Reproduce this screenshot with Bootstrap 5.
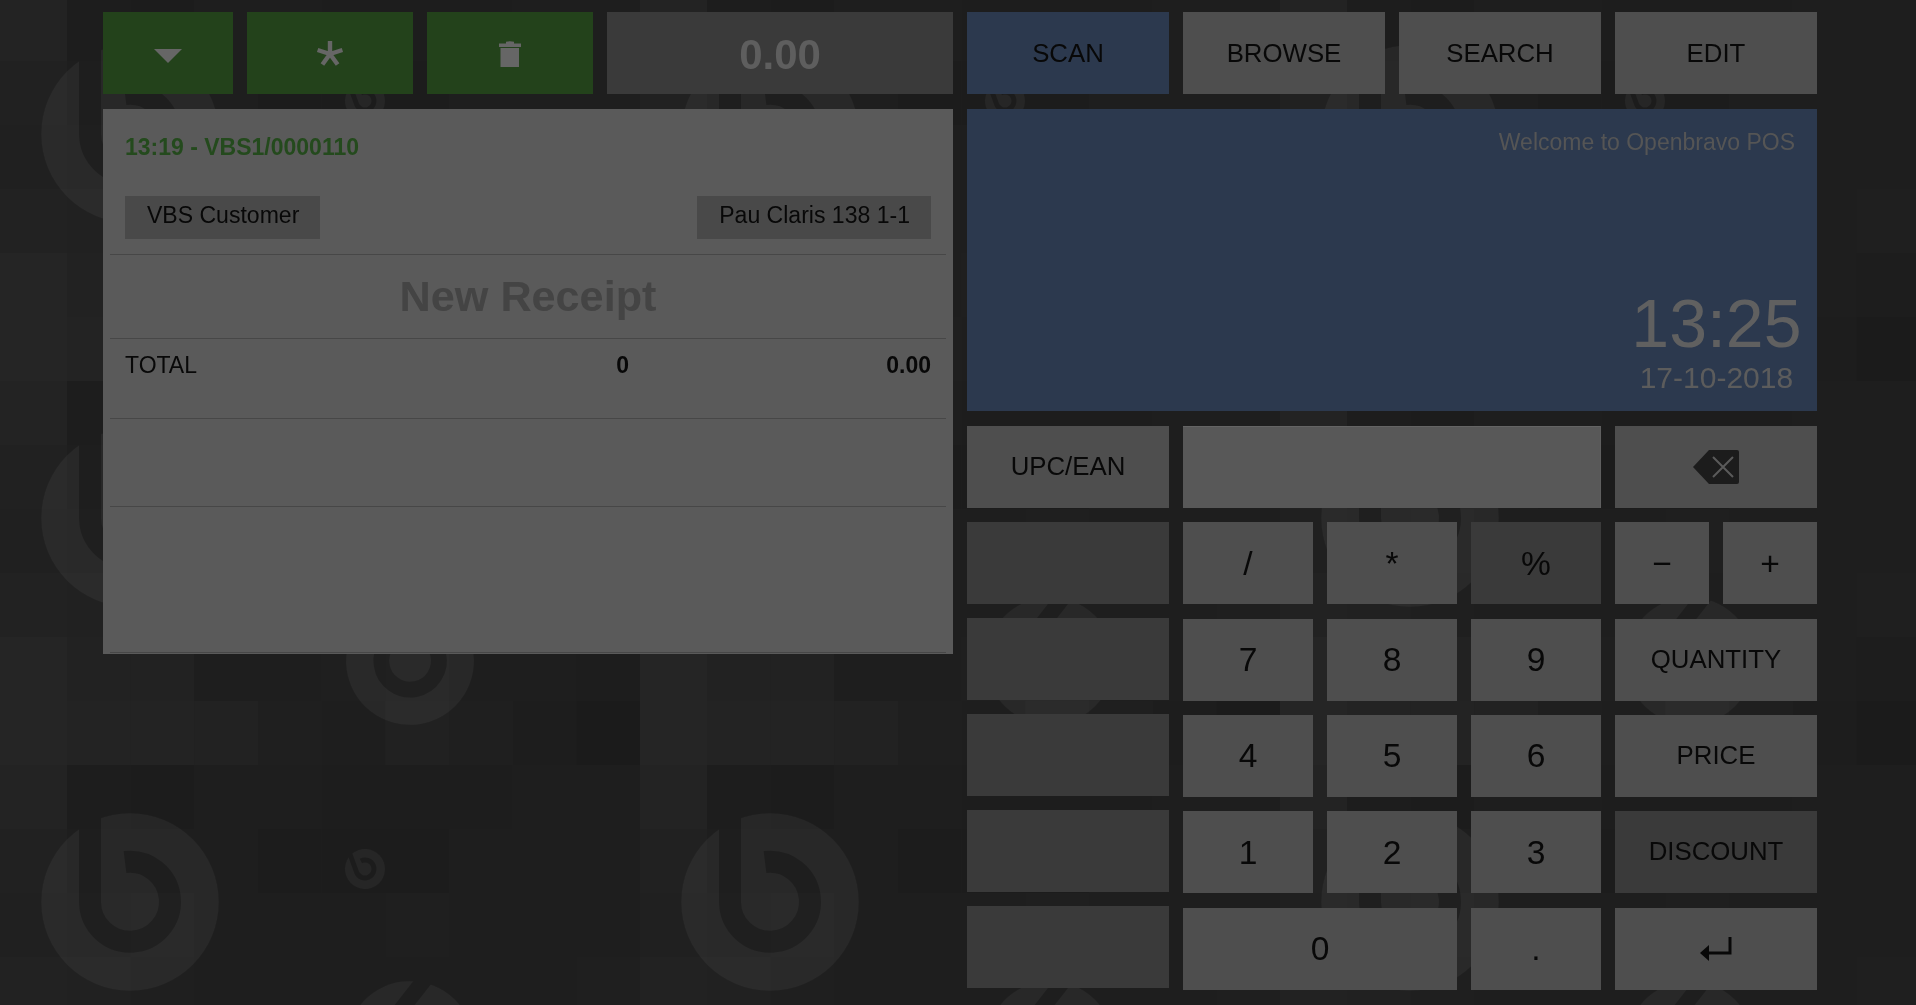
<!DOCTYPE html>
<html lang="en">
<head>
  <meta charset="UTF-8" />
  <title>Openbravo POS</title>
  <link href="https://cdn.jsdelivr.net/npm/bootstrap@5.3.0/dist/css/bootstrap.min.css" rel="stylesheet" />
  <style>
    html, body {
      height: 100%;
      overflow: hidden;
    }
    body {
      background-color: #1e1e1e;
      font-family: "Liberation Sans", Arial, sans-serif;
      color: #080808;
    }
    .pos-bg {
      position: fixed;
      top: 0;
      left: 0;
      width: 100%;
      height: 100%;
      z-index: -1;
    }
    .pos-wrap {
      width: 1714px;
      margin-left: 103px;
      padding-top: 12px;
      gap: 14px;
    }
    .pos-col {
      width: 850px;
    }
    .pos-toolbar {
      height: 82px;
      gap: 14px;
      margin-bottom: 15px;
    }
    .pos-key {
      background-color: #4e4e4e;
      color: #080808;
      font-size: 25.8px;
      padding: 0;
      height: 82px;
      line-height: 1;
    }
    .pos-key:hover, .pos-key:active {
      background-color: #4e4e4e;
      color: #080808;
    }
    .pos-toolbar .pos-key {
      padding-top: 1px;
    }
    .pos-green {
      background-color: #23421b;
    }
    .pos-green:hover, .pos-green:active {
      background-color: #23421b;
    }
    .pos-blue {
      background-color: #2c394e;
    }
    .pos-blue:hover, .pos-blue:active {
      background-color: #2c394e;
    }
    .pos-dim, .pos-dim:hover, .pos-dim:active {
      background-color: #3a3a3a;
    }
    .pos-w130 { width: 130px; }
    .pos-w166 { width: 166px; }
    .pos-w202 { width: 202px; }
    .pos-amount {
      background-color: #3a3a3a;
      color: #5e5e5e;
      font-size: 42px;
      font-weight: 700;
      padding-top: 2px;
    }
    .pos-ticket {
      height: 545px;
      padding: 0 7px;
      background-color: #5a5a5a;
    }
    .pos-section {
      padding: 0 15px;
      border-bottom: 1px solid #474747;
    }
    .pos-sec-head { height: 146px; padding-top: 25px; }
    .pos-sec-title { height: 84px; }
    .pos-sec-total { height: 80px; padding-top: 13px; }
    .pos-sec-empty { height: 88px; }
    .pos-sec-last { height: 146px; }
    .pos-ticket-id {
      color: #244a1d;
      font-size: 23px;
      font-weight: 700;
      line-height: 26px;
      margin-bottom: 36px;
    }
    .pos-chip {
      background-color: #494949;
      font-size: 23.04px;
      height: 43px;
      line-height: 39px;
      padding: 0 21px 0 22px;
    }
    .pos-receipt {
      color: #444;
      font-size: 43.2px;
      font-weight: 700;
      line-height: 82px;
    }
    .pos-total {
      font-size: 23px;
      line-height: 26px;
    }
    .pos-total-qty {
      width: 504px;
    }
    .pos-info {
      height: 302px;
      margin-bottom: 15px;
      padding: 20px 15.5px 16px 0;
      background-color: #2c394e;
    }
    .pos-welcome {
      color: #555;
      font-size: 23px;
      line-height: 26px;
      padding-right: 6.5px;
    }
    .pos-time {
      color: #606060;
      font-size: 68px;
      line-height: 68px;
      margin-bottom: 4px;
    }
    .pos-date {
      color: #5c5c5c;
      font-size: 30px;
      line-height: 34px;
    }
    .pos-pad {
      gap: 14px;
    }
    .pos-side {
      gap: 14px;
    }
    .pos-blank {
      height: 82px;
      background-color: #3a3a3a;
    }
    .pos-grid {
      display: grid;
      grid-template-columns: repeat(3, 130px) 94px 94px;
      grid-auto-rows: 82px;
      column-gap: 14px;
      row-gap: 14.33px;
    }
    .pos-span2 { grid-column: span 2; }
    .pos-span3 { grid-column: span 3; }
    .pos-input {
      background-color: #585858;
      border-top: 1px solid #646464;
      border-right: 1px solid #5f5f5f;
    }
    .pos-num {
      font-size: 33.6px;
    }
  </style>
</head>
<body>
  <svg class="pos-bg" xmlns="http://www.w3.org/2000/svg" aria-hidden="true">
    <defs>
      <mask id="logoMask" maskUnits="userSpaceOnUse" x="-95" y="-95" width="190" height="190">
        <rect x="-95" y="-95" width="190" height="190" fill="#fff"></rect>
        <path d="M-5 -40A40 40 0 1 1 -40 0V-95" fill="none" stroke="#000" stroke-width="22"></path>
      </mask>
      <g id="bravoLogo" mask="url(#logoMask)">
        <circle r="88.7" fill="#fff" fill-opacity="0.045"></circle>
      </g>
      <pattern id="tiles" width="640" height="384" patternUnits="userSpaceOnUse" patternTransform="translate(0 -3)">
        <g id="tileCells"></g>
        <use href="#bravoLogo" transform="translate(130 137)"></use>
        <use href="#bravoLogo" transform="translate(410 280) rotate(38) scale(0.72)"></use>
        <use href="#bravoLogo" transform="translate(365 104) rotate(-20) scale(0.225)"></use>
      </pattern>
    </defs>
    <rect width="100%" height="100%" fill="url(#tiles)"></rect>
  </svg>

  <div class="pos-wrap d-flex align-items-start">
    <div class="pos-col">
      <div class="pos-toolbar d-flex">
        <button class="btn rounded-0 border-0 pos-key pos-green pos-w130" type="button" aria-label="Menu">
          <svg width="28" height="14" viewBox="0 0 28 14" class="d-block mx-auto mt-1"><path d="M0 0H28L14 14Z" fill="#666"></path></svg>
        </button>
        <button class="btn rounded-0 border-0 pos-key pos-green pos-w166" type="button" aria-label="New">
          <svg width="28" height="28" viewBox="-14 -14 28 28" class="d-block mx-auto"><path d="M0 0V-13M0 0L12.4 -4M0 0L7.6 10.5M0 0L-7.6 10.5M0 0L-12.4 -4" fill="none" stroke="#666" stroke-width="4.4"></path></svg>
        </button>
        <button class="btn rounded-0 border-0 pos-key pos-green pos-w166" type="button" aria-label="Delete">
          <svg width="22" height="26" viewBox="0 0 22 26" class="d-block mx-auto"><path d="M0 2.5H7V0.8Q11 -0.4 15 0.8V2.5H22V6H0ZM1.5 7H20V26H1.5Z" fill="#666"></path></svg>
        </button>
        <div class="pos-amount flex-grow-1 d-flex align-items-center justify-content-center">0.00</div>
      </div>

      <div class="pos-ticket">
        <div class="pos-section pos-sec-head">
          <div class="pos-ticket-id">13:19 - VBS1/0000110</div>
          <div class="d-flex justify-content-between">
            <div class="pos-chip">VBS Customer</div>
            <div class="pos-chip">Pau Claris 138 1-1</div>
          </div>
        </div>
        <div class="pos-section pos-sec-title text-center">
          <div class="pos-receipt">New Receipt</div>
        </div>
        <div class="pos-section pos-sec-total">
          <div class="pos-total d-flex">
            <div class="pos-total-qty d-flex justify-content-between">
              <span>TOTAL</span>
              <span class="fw-bold">0</span>
            </div>
            <div class="flex-grow-1 text-end fw-bold">0.00</div>
          </div>
        </div>
        <div class="pos-section pos-sec-empty"></div>
        <div class="pos-section pos-sec-last"></div>
      </div>
    </div>

    <div class="pos-col">
      <div class="pos-toolbar d-flex">
        <button class="btn rounded-0 border-0 pos-key pos-blue pos-w202" type="button">SCAN</button>
        <button class="btn rounded-0 border-0 pos-key pos-w202" type="button">BROWSE</button>
        <button class="btn rounded-0 border-0 pos-key pos-w202" type="button">SEARCH</button>
        <button class="btn rounded-0 border-0 pos-key pos-w202" type="button">EDIT</button>
      </div>

      <div class="pos-info d-flex flex-column">
        <div class="pos-welcome text-end mb-auto">Welcome to Openbravo POS</div>
        <div class="align-self-end text-center">
          <div class="pos-time">13:25</div>
          <div class="pos-date">17-10-2018</div>
        </div>
      </div>

      <div class="pos-pad d-flex">
        <div class="pos-side pos-w202 d-flex flex-column">
          <button class="btn rounded-0 border-0 pos-key" type="button">UPC/EAN</button>
          <div class="pos-blank"></div>
          <div class="pos-blank"></div>
          <div class="pos-blank"></div>
          <div class="pos-blank"></div>
          <div class="pos-blank"></div>
        </div>
        <div class="pos-grid">
          <div class="pos-input pos-span3"></div>
          <button class="btn rounded-0 border-0 pos-key pos-span2" type="button" aria-label="Backspace">
            <svg width="46" height="34" viewBox="0 0 46 34" class="d-block mx-auto"><path d="M0 17L16 0H44Q46 0 46 2V32Q46 34 44 34H16Z" fill="#1c1c1c"></path><path d="M20 7L40 27M40 7L20 27" fill="none" stroke="#5a5a5a" stroke-width="2"></path></svg>
          </button>

          <button class="btn rounded-0 border-0 pos-key pos-num" type="button">/</button>
          <button class="btn rounded-0 border-0 pos-key pos-num" type="button">*</button>
          <button class="btn rounded-0 border-0 pos-key pos-num pos-dim" type="button">%</button>
          <button class="btn rounded-0 border-0 pos-key pos-num" type="button">−</button>
          <button class="btn rounded-0 border-0 pos-key pos-num" type="button">+</button>

          <button class="btn rounded-0 border-0 pos-key pos-num" type="button">7</button>
          <button class="btn rounded-0 border-0 pos-key pos-num" type="button">8</button>
          <button class="btn rounded-0 border-0 pos-key pos-num" type="button">9</button>
          <button class="btn rounded-0 border-0 pos-key pos-span2" type="button">QUANTITY</button>

          <button class="btn rounded-0 border-0 pos-key pos-num" type="button">4</button>
          <button class="btn rounded-0 border-0 pos-key pos-num" type="button">5</button>
          <button class="btn rounded-0 border-0 pos-key pos-num" type="button">6</button>
          <button class="btn rounded-0 border-0 pos-key pos-span2" type="button">PRICE</button>

          <button class="btn rounded-0 border-0 pos-key pos-num" type="button">1</button>
          <button class="btn rounded-0 border-0 pos-key pos-num" type="button">2</button>
          <button class="btn rounded-0 border-0 pos-key pos-num" type="button">3</button>
          <button class="btn rounded-0 border-0 pos-key pos-dim pos-span2" type="button">DISCOUNT</button>

          <button class="btn rounded-0 border-0 pos-key pos-num pos-span2" type="button">0</button>
          <button class="btn rounded-0 border-0 pos-key pos-num" type="button">.</button>
          <button class="btn rounded-0 border-0 pos-key pos-span2" type="button" aria-label="Enter">
            <svg width="32" height="24" viewBox="0 0 32 24" class="d-block mx-auto"><path d="M0 16L9 8V14.5H28.5V0H31.5V17.5H9V24Z" fill="#080808"></path></svg>
          </button>
        </div>
      </div>
    </div>
  </div>

  <script>
    // greys of the background tiles, the block repeats every 640 x 384
    const tileRows = [
      "23 1d 1c 1e 1e 1d 1d 1d 1e 1e",
      "21 1e 1e 1e 1c 1c 1c 1e 1e 1e",
      "20 1f 20 1e 1e 1e 1f 1e 1e 1e",
      "22 21 1f 1e 1e 1e 1e 1e 1e 1f",
      "25 22 22 1e 1e 1f 20 1e 1e 1d",
      "25 23 23 22 1f 1e 21 1f 1d 1b"
    ];
    let cells = "";
    tileRows.forEach((row, r) => {
      row.split(" ").forEach((g, c) => {
        // first column is a bit wider than the others
        const x = c === 0 ? 0 : 67 + (c - 1) * 63.67;
        const w = c === 0 ? 67 : 63.67;
        cells += `<rect x="${x}" y="${r * 64}" width="${w}" height="64" fill="#${g}${g}${g}"></rect>`;
      });
    });
    document.getElementById("tileCells").innerHTML = cells;
  </script>
  <script src="https://cdn.jsdelivr.net/npm/bootstrap@5.3.0/dist/js/bootstrap.bundle.min.js"></script>
</body>
</html>
